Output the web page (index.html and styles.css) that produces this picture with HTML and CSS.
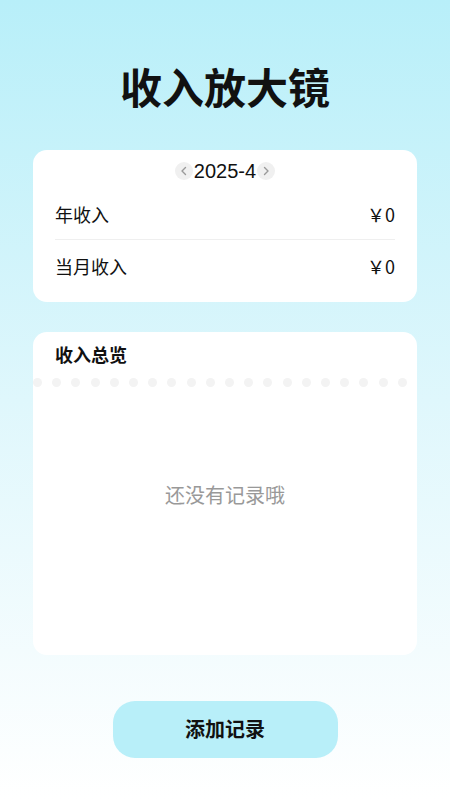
FILE: index.html
```html
<!DOCTYPE html>
<html lang="zh-CN">
<head>
    <meta charset="UTF-8">
    <meta name="viewport" content="width=device-width, initial-scale=1.0">
    <title>收入放大镜</title>
    <link rel="stylesheet" href="styles.css">
</head>
<body>
    <div class="page">
        <h1 class="title">收入放大镜</h1>

        <!-- Summary card -->
        <div class="card summary">
            <div class="month-nav">
                <span class="arrow">
                    <svg width="10" height="10" viewBox="0 0 10 10"><path d="M6.5 1.5 L3 5 L6.5 8.5" fill="none" stroke="#999" stroke-width="1.4" stroke-linecap="round" stroke-linejoin="round"/></svg>
                </span>
                <span class="month">2025-4</span>
                <span class="arrow">
                    <svg width="10" height="10" viewBox="0 0 10 10"><path d="M3.5 1.5 L7 5 L3.5 8.5" fill="none" stroke="#999" stroke-width="1.4" stroke-linecap="round" stroke-linejoin="round"/></svg>
                </span>
            </div>
            <div class="row line">
                <span>年收入</span>
                <span class="money">￥0</span>
            </div>
            <div class="row">
                <span>当月收入</span>
                <span class="money">￥0</span>
            </div>
        </div>

        <!-- Overview card -->
        <div class="card overview">
            <h3 class="card-title">收入总览</h3>
            <div class="dots" id="dots"></div>
            <div class="empty">还没有记录哦</div>
        </div>

        <button class="btn">添加记录</button>
    </div>

    <script>
        // Dotted separator
        const dots = document.getElementById('dots');
        for (let i = 0; i < 20; i++) {
            const d = document.createElement('span');
            d.className = 'dot';
            dots.appendChild(d);
        }
    </script>
</body>
</html>
```

FILE: styles.css
```css
/* Income magnifier page */
html, body { margin: 0; padding: 0; }
body { font-family: "Noto Sans CJK SC", "Noto Sans", sans-serif; color: #111; background: linear-gradient(#b8eff9 0%, #dff7fc 50%, #ffffff 100%); min-height: 800px; }
.page { padding: 61px 33px 0; display: flex; flex-direction: column; }
.title { margin: 0; font-size: 42px; line-height: 50px; font-weight: 700; text-align: center; }
.card { background: #fff; border-radius: 14px; }
.summary { margin-top: 39px; padding: 10px 22px 10px; }
.month-nav { display: flex; justify-content: center; align-items: center; gap: 1px; height: 22px; margin-bottom: 6px; }
.month { font-family: "Liberation Sans", Arial, sans-serif; font-size: 20px; line-height: 22px; }
.arrow { width: 18px; height: 18px; border-radius: 50%; background: #f0f0f0; display: flex; align-items: center; justify-content: center; }
.row { display: flex; justify-content: space-between; align-items: center; height: 52px; font-size: 18px; }
.money { font-family: "Noto Sans CJK SC", sans-serif; }
.line { border-bottom: 1px solid #efefef; height: 51px; }
.overview { margin-top: 30px; height: 323px; box-sizing: border-box; padding-top: 10px; }
.card-title { margin: 0; padding: 0 22px; font-size: 18px; line-height: 24px; font-weight: 700; }
.dots { display: flex; justify-content: space-between; margin: 12px 10px 0 0; height: 9px; }
.dot { width: 9px; height: 9px; border-radius: 50%; background: #f3f3f3; }
.empty { padding-top: 96px; text-align: center; font-size: 20px; line-height: 24px; color: #999; }
.btn { align-self: center; margin-top: 46px; width: 225px; height: 57px; padding-bottom: 4px; border: none; border-radius: 22px; background: #b8eff9; font-family: "Noto Sans CJK SC", sans-serif; font-size: 20px; font-weight: 700; color: #111; cursor: pointer; }
```
